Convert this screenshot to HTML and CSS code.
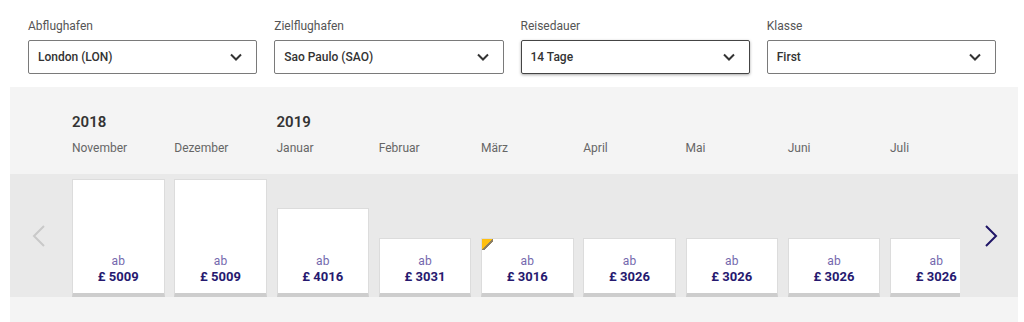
FILE: index.html
```html
<!DOCTYPE html>
<html lang="de">
<head>
    <meta charset="UTF-8">
    <meta name="viewport" content="width=device-width, initial-scale=1.0">
    <title>Flugpreise</title>
    <link rel="stylesheet" href="styles.css">
</head>
<body>
    <div class="filters">
        <div class="field">
            <label>Abflughafen</label>
            <div class="select">
                <span>London (LON)</span>
                <svg class="caret" viewBox="0 0 12 8"><path d="M1 1.5l5 5 5-5"/></svg>
            </div>
        </div>
        <div class="field">
            <label>Zielflughafen</label>
            <div class="select">
                <span>Sao Paulo (SAO)</span>
                <svg class="caret" viewBox="0 0 12 8"><path d="M1 1.5l5 5 5-5"/></svg>
            </div>
        </div>
        <div class="field">
            <label>Reisedauer</label>
            <div class="select focused">
                <span>14 Tage</span>
                <svg class="caret" viewBox="0 0 12 8"><path d="M1 1.5l5 5 5-5"/></svg>
            </div>
        </div>
        <div class="field">
            <label>Klasse</label>
            <div class="select">
                <span>First</span>
                <svg class="caret" viewBox="0 0 12 8"><path d="M1 1.5l5 5 5-5"/></svg>
            </div>
        </div>
    </div>

    <div class="calendar">
        <div class="months">
            <div class="month"><div class="year">2018</div><div class="name">November</div></div>
            <div class="month"><div class="year"></div><div class="name">Dezember</div></div>
            <div class="month"><div class="year">2019</div><div class="name">Januar</div></div>
            <div class="month"><div class="year"></div><div class="name">Februar</div></div>
            <div class="month"><div class="year"></div><div class="name">März</div></div>
            <div class="month"><div class="year"></div><div class="name">April</div></div>
            <div class="month"><div class="year"></div><div class="name">Mai</div></div>
            <div class="month"><div class="year"></div><div class="name">Juni</div></div>
            <div class="month"><div class="year"></div><div class="name">Juli</div></div>
        </div>

        <div class="prices">
            <button class="nav prev" aria-label="Zurück">
                <svg viewBox="0 0 14 22"><path d="M12 1L2 11l10 10"/></svg>
            </button>
            <div class="track">
                <div class="card" style="height: 118px"><span class="from">ab</span><span class="price">£ 5009</span></div>
                <div class="card" style="height: 118px"><span class="from">ab</span><span class="price">£ 5009</span></div>
                <div class="card" style="height: 89px"><span class="from">ab</span><span class="price">£ 4016</span></div>
                <div class="card" style="height: 59px"><span class="from">ab</span><span class="price">£ 3031</span></div>
                <div class="card cheapest" style="height: 59px"><span class="from">ab</span><span class="price">£ 3016</span></div>
                <div class="card" style="height: 59px"><span class="from">ab</span><span class="price">£ 3026</span></div>
                <div class="card" style="height: 59px"><span class="from">ab</span><span class="price">£ 3026</span></div>
                <div class="card" style="height: 59px"><span class="from">ab</span><span class="price">£ 3026</span></div>
                <div class="card" style="height: 59px"><span class="from">ab</span><span class="price">£ 3026</span></div>
            </div>
            <button class="nav next" aria-label="Weiter">
                <svg viewBox="0 0 14 22"><path d="M2 1l10 10L2 21"/></svg>
            </button>
        </div>

        <div class="bottom-band"></div>
    </div>
</body>
</html>
```

FILE: styles.css
```css
body {
    font-family: Roboto, "Liberation Sans", sans-serif;
    background-color: white;
    margin: 0;
    color: #333;
}

.filters {
    display: grid;
    grid-template-columns: repeat(4, 1fr);
    gap: 17px;
    padding: 18px 28px 0 28px;
}

.field label {
    display: block;
    font-size: 12px;
    line-height: 16px;
    color: #555;
    margin-bottom: 6px;
}

.select {
    display: flex;
    align-items: center;
    justify-content: space-between;
    height: 34px;
    box-sizing: border-box;
    border: 1px solid #7a7a7a;
    border-radius: 2px;
    padding: 0 14px 0 9px;
    font-size: 12px;
    font-weight: 500;
    color: #333;
}

.select.focused {
    border-color: #444;
    box-shadow: 0 1px 3px rgba(0, 0, 0, 0.35);
}

.caret {
    width: 12px;
    height: 8px;
    fill: none;
    stroke: #333;
    stroke-width: 2;
}

.calendar {
    margin: 13px 6px 0 10px;
    background: #f4f4f4;
}

.months {
    display: flex;
    gap: 9.75px;
    height: 87px;
    box-sizing: border-box;
    padding: 26px 0 0 62px;
}

.month {
    flex: 0 0 92.5px;
}

.year {
    height: 18px;
    font-size: 15px;
    font-weight: 600;
    color: #333;
}

.name {
    margin-top: 9px;
    font-size: 12px;
    line-height: 16px;
    color: #666;
}

.prices {
    display: grid;
    grid-template-columns: 62px 888px 1fr;
    align-items: end;
    height: 123px;
    background: #e9e9e9;
}

.nav {
    align-self: center;
    background: none;
    border: none;
    padding: 0;
    cursor: pointer;
}

.nav svg {
    display: block;
    width: 14px;
    height: 22px;
    fill: none;
    stroke-width: 2;
}

.prev {
    justify-self: start;
    padding-left: 22px;
}

.prev svg {
    stroke: #c9c9c9;
}

.next {
    justify-self: start;
    padding-left: 24px;
}

.next svg {
    stroke: #1f1566;
}

.track {
    display: flex;
    gap: 9.75px;
    align-items: flex-end;
    overflow: hidden;
}

.card {
    position: relative;
    flex: 0 0 92.5px;
    box-sizing: border-box;
    display: flex;
    flex-direction: column;
    justify-content: flex-end;
    align-items: center;
    background: white;
    border: 1px solid #dcdcdc;
    border-bottom: 4px solid #cdcdcd;
    padding-bottom: 8px;
    cursor: pointer;
}

.from {
    font-size: 12px;
    line-height: 13px;
    color: #7468ad;
}

.price {
    font-size: 13px;
    line-height: 17px;
    font-weight: 700;
    color: #26196f;
}

.cheapest:before {
    content: "";
    position: absolute;
    top: 0;
    left: 0;
    width: 11px;
    height: 11px;
    background: linear-gradient(135deg, #ffbf0f 0, #ffbf0f 48%, #8d7f63 48%, #8d7f63 62%, transparent 62%);
}

.bottom-band {
    height: 40px;
}
```
